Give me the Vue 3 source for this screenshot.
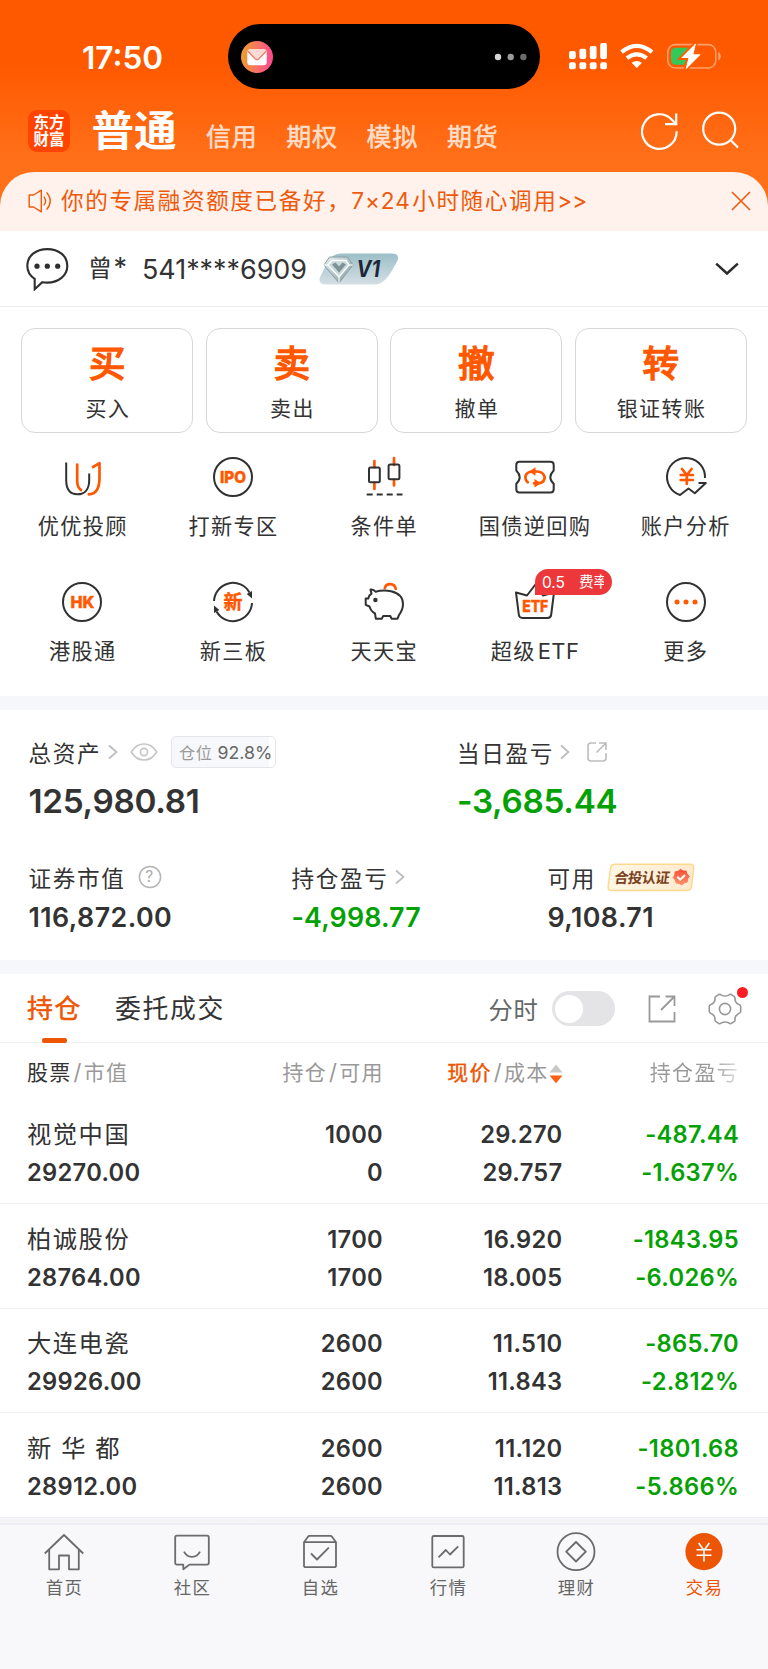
<script setup>
const accountTabs = ['信用', '期权', '模拟', '期货']
const actions = [
  { mark: '买', label: '买入' },
  { mark: '卖', label: '卖出' },
  { mark: '撤', label: '撤单' },
  { mark: '转', label: '银证转账' },
]
const tools = [
  { icon: 'uu', label: '优优投顾' },
  { icon: 'ipo', label: '打新专区' },
  { icon: 'cond', label: '条件单' },
  { icon: 'repo', label: '国债逆回购' },
  { icon: 'analysis', label: '账户分析' },
  { icon: 'hk', label: '港股通' },
  { icon: 'neeq', label: '新三板' },
  { icon: 'pig', label: '天天宝' },
  { icon: 'etf', label: '超级', latin: 'ETF', badge: true },
  { icon: 'more', label: '更多' },
]
const holdings = [
  { name: '视觉中国', value: '29270.00', qty: '1000', avail: '0', price: '29.270', cost: '29.757', pnl: '-487.44', pct: '-1.637%' },
  { name: '柏诚股份', value: '28764.00', qty: '1700', avail: '1700', price: '16.920', cost: '18.005', pnl: '-1843.95', pct: '-6.026%' },
  { name: '大连电瓷', value: '29926.00', qty: '2600', avail: '2600', price: '11.510', cost: '11.843', pnl: '-865.70', pct: '-2.812%' },
  { name: '新 华 都', value: '28912.00', qty: '2600', avail: '2600', price: '11.120', cost: '11.813', pnl: '-1801.68', pct: '-5.866%' },
]
const nav = [
  { icon: 'home', label: '首页' },
  { icon: 'chat', label: '社区' },
  { icon: 'pick', label: '自选' },
  { icon: 'market', label: '行情' },
  { icon: 'wealth', label: '理财' },
  { icon: 'trade', label: '交易', active: true },
]
</script>

<template>
  <div class="page">
    <header class="top">
      <div class="status">
        <span class="time">17:50</span>
        <div class="island">
          <svg class="mail" width="32" height="32" viewBox="0 0 32 32">
            <defs>
              <linearGradient id="mailBg" x1="0" x2="1" y1="0" y2="0.1">
                <stop offset="0" stop-color="#e9a526" /><stop offset="0.55" stop-color="#fb7363" /><stop offset="1" stop-color="#fa4c8c" />
              </linearGradient>
            </defs>
            <circle cx="16" cy="16" r="16" fill="url(#mailBg)" />
            <rect x="6.3" y="8.3" width="19.4" height="16" rx="3" fill="#fff" />
            <path d="M7.3 9.3Q8 8.3 9.5 8.3H22.5Q24 8.3 24.7 9.3L17.7 17Q16 18.6 14.3 17Z" fill="#ffd9d3" />
            <path d="M6.8 10L14 17.8Q16 19.6 18 17.8L25.2 10" fill="none" stroke="#f57a62" stroke-width="1.3" />
          </svg>
          <svg width="34" height="8" viewBox="0 0 34 8">
            <circle cx="4" cy="4" r="3.2" fill="#d6d6d6" /><circle cx="16.7" cy="4" r="3.2" fill="#9c9c9c" /><circle cx="29.4" cy="4" r="3.2" fill="#6b6b6b" />
          </svg>
        </div>
        <svg class="signals" width="154" height="28" viewBox="0 0 154 28">
          <g fill="#fff">
            <rect x="0" y="9" width="6.8" height="8" rx="2" /><rect x="10.4" y="6.8" width="6.8" height="10.2" rx="2" />
            <rect x="20.8" y="4" width="6.8" height="13" rx="2" /><rect x="31.2" y="1" width="6.8" height="16" rx="2" />
            <rect x="0" y="20.3" width="6.8" height="7" rx="2" /><rect x="10.4" y="20.3" width="6.8" height="7" rx="2" />
            <rect x="20.8" y="20.3" width="6.8" height="7" rx="2" /><rect x="31.2" y="20.3" width="6.8" height="7" rx="2" />
            <path d="M67.8 26L62.6 20.8Q67.8 17 73 20.8Z" />
          </g>
          <g fill="none" stroke="#fff" stroke-width="4.2">
            <path d="M52.6 10.2Q67.8 -2.4 83 10.2" /><path d="M58 16.2Q67.8 8.6 77.6 16.2" />
          </g>
          <rect x="98.8" y="2.6" width="48" height="23.4" rx="7.5" fill="none" stroke="#fff" stroke-opacity=".42" stroke-width="1.6" />
          <path d="M149.3 9.8Q151.8 11.4 151.8 14.2Q151.8 17 149.3 18.6Z" fill="#fff" fill-opacity=".45" />
          <path d="M107 5.8H119L113 15L114 17.5H118L115 22.8H107Q102 22.8 102 17.8V10.8Q102 5.8 107 5.8Z" fill="#34c759" />
          <path d="M126.8 1.5L112.4 16H119.6L116.8 27.2L131.4 12.6H124.2Z" fill="#fff" stroke="#ff5c04" stroke-width="4" paint-order="stroke" />
          <path d="M126.8 1.5L112.4 16H119.6L116.8 27.2L131.4 12.6H124.2Z" fill="#fff" />
        </svg>
      </div>
      <div class="titlebar">
        <div class="logo"><span>东方</span><span>财富</span></div>
        <h1>普通</h1>
        <nav class="acct-tabs"><span v-for="t in accountTabs" :key="t">{{ t }}</span></nav>
        <svg class="tools-svg" width="100" height="40" viewBox="0 0 100 40" fill="none" stroke="#fff" stroke-width="2.2">
          <path d="M35.6 20.3A17.3 17.3 0 1 1 30.6 8.4L35 13" /><path d="M35.2 2.5V13.2H24" />
          <circle cx="78.2" cy="17.7" r="16" /><path d="M89.5 29L97 36.5" />
        </svg>
      </div>
    </header>

    <div class="notice">
      <svg width="24" height="24" viewBox="0 0 24 24" fill="none" stroke="#ee5a0c" stroke-width="1.4" stroke-linejoin="round">
        <path d="M1.2 6H5.6L13.3 1.2V22.8L5.6 18H1.2Z" /><path d="M15.8 7.6Q19.4 12 15.8 16.4M18.6 3.4Q25.8 12 18.6 20.6" />
      </svg>
      <p>你的专属融资额度已备好，<span class="lat">7×24</span>小时随心调用<span class="arr">&gt;&gt;</span></p>
      <svg class="close" width="20" height="20" viewBox="0 0 20 20" stroke="#ee5a0c" stroke-width="1.6"><path d="M1 1L19 19M19 1L1 19" /></svg>
    </div>

    <div class="account">
      <svg width="44" height="44" viewBox="0 0 44 44">
        <path d="M9.7 42.2V31.8Q2.3 27 2.3 18.7C2.3 8.8 11 2.1 22.3 2.1S42.3 8.8 42.3 18.7S33.5 35.6 22.3 35.6Q19.5 35.6 17.3 35.2Z" fill="none" stroke="#2f2f2f" stroke-width="2.1" />
        <g fill="#2f2f2f"><circle cx="12" cy="19.2" r="2.6" /><circle cx="22.3" cy="19.2" r="2.6" /><circle cx="32.7" cy="19.2" r="2.6" /></g>
      </svg>
      <span class="who">曾<i>*</i></span><span class="no">541****6909</span>
      <svg class="vip" width="80" height="32" viewBox="0 0 80 32">
        <defs>
          <linearGradient id="vbg" x1="0" x2="0" y1="0" y2="1"><stop offset="0" stop-color="#9cbfc7" /><stop offset="1" stop-color="#d3dfe4" /></linearGradient>
          <linearGradient id="dia" x1="0" x2="1" y1="0" y2="1"><stop offset="0" stop-color="#e9f2f3" /><stop offset="1" stop-color="#82979b" /></linearGradient>
        </defs>
        <path d="M22 .5H73Q81 .5 78.6 7.5L75 14Q66 31 57 31.5H7Q-1 31.5 .8 24.5L7 12Q12 .5 22 .5Z" fill="url(#vbg)" />
        <path d="M10.5 4H28.5L34 12L20 30L5 12Z" fill="url(#dia)" stroke="#879da3" />
        <path d="M13 7.5H27L30 12L20 24L9 12Z" fill="#c9d8da" stroke="#f8ffff" stroke-width="1.3" />
        <path d="M13 11.5L20 19.5L27 11.5L23.5 9.5L20 13.5L16.5 9.5Z" fill="#7d9296" /><path d="M5 12H10M30 12H34M20 24V30" stroke="#fff" />
        <text x="37.5" y="24" class="viptext" textLength="23.5" lengthAdjust="spacingAndGlyphs">V1</text>
      </svg>
      <svg class="down" width="24" height="14" viewBox="0 0 24 14" fill="none" stroke="#2b2b2b" stroke-width="2.5"><path d="M1.2 1.6L12 11.5L22.8 1.6" /></svg>
    </div>

    <section class="actions">
      <div v-for="a in actions" :key="a.mark" class="card"><b>{{ a.mark }}</b><span>{{ a.label }}</span></div>
    </section>

    <section class="tools">
      <div v-for="t in tools" :key="t.icon" class="tool">
        <svg width="44" height="44" viewBox="-22 -22 44 44" class="ticon">
          <template v-if="t.icon === 'uu'">
            <path d="M-15.8 -14.5V3C-15.8 12 -12 17.3 -4.5 17.3S7.2 12 7.2 3V-3.5" />
            <path class="o" d="M-4.8 -12.5V4Q-4.8 10.5 -1 13M11 -10L17.5 -13.8V1Q17.5 17 6.8 17.3" />
          </template>
          <template v-else-if="t.icon === 'ipo'"><circle r="19" /><text class="ot" x="0" y="5.9" text-anchor="middle" font-size="16" textLength="26" lengthAdjust="spacingAndGlyphs">IPO</text></template>
          <template v-else-if="t.icon === 'cond'">
            <path class="o" d="M-9.6 -16V-9.5M-9.6 6V12M10 -19V-12M10 2.5V8.5" />
            <rect x="-15" y="-9.5" width="10.8" height="14.7" rx="1.5" /><rect x="4.6" y="-12.5" width="10.8" height="14.7" rx="1.5" />
            <path d="M-17.3 17.4H18.5" stroke-dasharray="6 4" />
          </template>
          <template v-else-if="t.icon === 'repo'">
            <path d="M-15.5 -15.2H15.5Q18.7 -15.2 18.7 -12V-6.5Q15.3 -3 15.3 .3Q15.3 3.6 18.7 6.8V12.2Q18.7 15.4 15.5 15.4H-15.5Q-18.7 15.4 -18.7 12.2V6.8Q-15.3 3.6 -15.3 .3Q-15.3 -3 -18.7 -6.5V-12Q-18.7 -15.2 -15.5 -15.2Z" />
            <path class="o" d="M-7.3 5.3Q-11.3 1.5 -8.5 -3Q-6.5 -5.5 -2 -5.5H1.5Q4.5 -5.5 6.5 -4.3M7.3 -3.8Q11.3 -.5 8.5 4Q6.5 6.3 2 6.3H-1" />
            <path class="of" d="M-6 -5.5L.5 -9.7V-1.3ZM6 6.3L-.5 2.1V10.5Z" />
          </template>
          <template v-else-if="t.icon === 'analysis'">
            <path d="M19 1A19 19 0 1 0 -6 18L2.5 11.5L8.8 16.2L19.8 6H12.5" />
            <path class="o" d="M-4 -8L.8 -2L5.6 -8M.8 -2V7M-5.3 -2H6.9M-5.3 3H6.9" stroke-width="2.8" />
          </template>
          <template v-else-if="t.icon === 'hk'"><circle r="19" /><text class="ot" x=".5" y="6.1" text-anchor="middle" font-size="16.5" textLength="24" lengthAdjust="spacingAndGlyphs">HK</text></template>
          <template v-else-if="t.icon === 'neeq'">
            <path d="M-19 -1A19 19 0 0 1 16.5 -9.5M19 1A19 19 0 0 1 -16.5 9.5" />
            <path class="df" d="M13.7 -8L19 -11V-3.5ZM-13.7 8L-19 11V3.5Z" />
            <text class="ot cjk" x="0" y="6.6" text-anchor="middle" font-size="19">新</text>
          </template>
          <template v-else-if="t.icon === 'pig'">
            <path d="M-8.5 -10.3Q-1 -12.2 7 -10.8Q19 -8 19 2Q19 7.5 15 13L13.5 16.7H7.5L6.3 14H-.8L-2.3 16.7H-8.2L-9 11.5Q-13 9.5 -14.5 4.5L-18.3 2.8V-3.5H-15.8L-14.5 -6.6L-12.5 -8.2L-13.5 -12.5Q-10.5 -13 -8.5 -10.3Z" />
            <circle class="df" cx="-8.6" cy="-2" r="2.2" /><path class="o" d="M.8 -13.8C2 -19.3 10.5 -19.5 11.8 -13" />
          </template>
          <template v-else-if="t.icon === 'etf'">
            <path d="M-19 -9.5L-8 -6.5L0 -17L8 -6.5L19 -9.5L16.2 12.5Q15.8 16 12.5 16H-12.5Q-15.8 16 -16.2 12.5Z" />
            <text class="ot" x=".2" y="9.6" text-anchor="middle" font-size="16.5" textLength="26" lengthAdjust="spacingAndGlyphs">ETF</text>
          </template>
          <template v-else><circle r="19" /><circle class="of" cx="-9" r="2.5" /><circle class="of" r="2.5" /><circle class="of" cx="9" r="2.5" /></template>
        </svg>
        <span>{{ t.label }}<i v-if="t.latin">{{ t.latin }}</i></span>
        <div v-if="t.badge" class="rate"><em>0.5</em><em class="cut">费率</em></div>
      </div>
    </section>

    <div class="band"></div>

    <section class="assets">
      <div class="row two">
        <div>
          <div class="lbl">总资产
            <svg class="gt" width="10" height="16" viewBox="0 0 10 16"><path d="M1 1.5L8.5 8L1 14.5" /></svg>
            <svg class="eye" width="28" height="20" viewBox="0 0 28 20" fill="none" stroke="#c6c6c6" stroke-width="1.7"><path d="M1.3 10Q6 2 14 2T26.7 10Q22 18 14 18T1.3 10Z" /><circle cx="14" cy="10" r="3.6" /></svg>
            <span class="pos">仓位<b>92.8%</b></span>
          </div>
          <div class="big">125,980.81</div>
        </div>
        <div>
          <div class="lbl">当日盈亏
            <svg class="gt" width="10" height="16" viewBox="0 0 10 16"><path d="M1 1.5L8.5 8L1 14.5" /></svg>
            <svg class="ext" width="20" height="20" viewBox="0 0 20 20" fill="none" stroke="#bdbdbd" stroke-width="1.6"><path d="M9 1H4Q1 1 1 4V16Q1 19 4 19H16Q19 19 19 16V11M12 1H19V8M18.5 1.5L9.5 10.5" /></svg>
          </div>
          <div class="big g">-3,685.44</div>
        </div>
      </div>
      <div class="row three">
        <div>
          <div class="lbl">证券市值
            <svg class="q" width="24" height="24" viewBox="0 0 24 24"><circle cx="12" cy="12" r="10.6" fill="none" stroke="#b4b4b4" stroke-width="1.5" /><text x="12" y="17.2" text-anchor="middle" font-size="15.5" fill="#aaa">?</text></svg>
          </div>
          <div class="mid">116,872.00</div>
        </div>
        <div>
          <div class="lbl">持仓盈亏
            <svg class="gt" width="10" height="16" viewBox="0 0 10 16"><path d="M1 1.5L8.5 8L1 14.5" /></svg>
          </div>
          <div class="mid g tight">-4,998.77</div>
        </div>
        <div>
          <div class="lbl">可用
            <svg class="cert" width="88" height="29" viewBox="0 0 88 29">
              <defs>
                <linearGradient id="cbg" x1="0" x2="1"><stop offset="0" stop-color="#fff7e4" /><stop offset="1" stop-color="#ffe9ce" /></linearGradient>
                <linearGradient id="seal" x1="0" x2="0" y1="0" y2="1"><stop offset="0" stop-color="#f44d38" /><stop offset="1" stop-color="#ff9468" /></linearGradient>
              </defs>
              <path d="M8 1.2H83Q87.3 1.2 86.7 5L84.6 23.5Q84 27.4 80.2 27.4H4.7Q.7 27.4 1.2 23.5L3.6 5Q4.2 1.2 8 1.2Z" fill="url(#cbg)" stroke="#fbd98d" stroke-width="1.5" />
              <text x="0" y="0" transform="translate(6.5 19.6) skewX(-8)" class="certtext" textLength="57.5">合投认证</text>
              <path d="M73.5 6.3L76.1 8L79.2 8L80 11L82.3 13.3L80.6 16L80.2 19.1L77.2 19.8L74.9 22L72.2 20.4L69.1 20L68.4 17L66.2 14.7L67.8 12L68.2 8.9L71.2 8.2Z" fill="url(#seal)" stroke="url(#seal)" stroke-width="1" stroke-linejoin="round" />
              <path d="M70.3 13.8L73.2 16.7L78 12" fill="none" stroke="#fff" stroke-width="2" />
            </svg>
          </div>
          <div class="mid">9,108.71</div>
        </div>
      </div>
    </section>

    <div class="band"></div>

    <section class="tabs">
      <span class="tab on">持仓</span>
      <span class="tab">委托成交</span>
      <span class="fs">分时</span>
      <span class="switch"></span>
      <svg class="share" width="28" height="28" viewBox="0 0 28 28" fill="none" stroke="#9a9a9a" stroke-width="1.8"><path d="M12 1.5H1.5V26.5H26.5V17M17.5 1.5H26.5V11M26 2L13 15" /></svg>
      <div class="gear">
        <svg width="34" height="32" viewBox="-17 -16 34 32" fill="none" stroke="#979797" stroke-width="1.6" stroke-linejoin="round">
          <path d="M-6 -14.7Q-4.8 -14.9 -3.6 -13.9Q0 -12 3.6 -13.9Q4.8 -14.9 6 -14.7L9.4 -12.4Q10.2 -11.8 10 -10Q10 -6.6 13 -5Q15.6 -4 15.7 -2.8V2.8Q15.6 4 13 5Q10 6.6 10 10Q10.2 11.8 9.4 12.4L6 14.7Q4.8 14.9 3.6 13.9Q0 12 -3.6 13.9Q-4.8 14.9 -6 14.7L-9.4 12.4Q-10.2 11.8 -10 10Q-10 6.6 -13 5Q-15.6 4 -15.7 2.8V-2.8Q-15.6 -4 -13 -5Q-10 -6.6 -10 -10Q-10.2 -11.8 -9.4 -12.4Z" /><circle r="5.6" />
        </svg>
        <i></i>
      </div>
    </section>

    <section class="table">
      <div class="tr th">
        <div><b>股票</b><s>/</s>市值</div>
        <div>持仓<s>/</s>可用</div>
        <div class="price"><b>现价</b><s>/</s>成本<svg width="14" height="20" viewBox="0 0 14 20"><path d="M7 .5L13.5 8.5H.5Z" fill="#c8c8c8" /><path d="M7 19.3L13.5 11.5H.5Z" fill="#fb5f13" /></svg></div>
        <div class="fade">持仓盈亏</div>
      </div>
      <div v-for="h in holdings" :key="h.name" class="tr stock">
        <div><span class="name">{{ h.name }}</span><span>{{ h.value }}</span></div>
        <div><span>{{ h.qty }}</span><span>{{ h.avail }}</span></div>
        <div><span>{{ h.price }}</span><span>{{ h.cost }}</span></div>
        <div class="g"><span>{{ h.pnl }}</span><span>{{ h.pct }}</span></div>
      </div>
    </section>

    <footer class="nav">
      <div v-for="n in nav" :key="n.icon" :class="['item', { active: n.active }]">
        <svg width="40" height="40" viewBox="-20 -20 40 40" fill="none" stroke="#6b6b6b" stroke-width="1.8" stroke-linejoin="round">
          <path v-if="n.icon === 'home'" d="M-19.2 1.5L0 -17L19.2 1.5M-14.8 -2.2V17.3H-5V3.5H5V17.3H14.8V-2.2" />
          <template v-else-if="n.icon === 'chat'"><path d="M-15 -16.3H15Q16.8 -16.3 16.8 -14.5V10.8Q16.8 12.6 15 12.6H-2.5L-8.7 17.2V12.6H-15Q-16.8 12.6 -16.8 10.8V-14.5Q-16.8 -16.3 -15 -16.3Z" /><path d="M-8 -.3Q-5.5 4.9 0 4.9T8 -.3" /></template>
          <template v-else-if="n.icon === 'pick'"><path d="M-16 -9.8L-12 -15.2Q-11.5 -16.2 -10.5 -16.2H10.5Q11.5 -16.2 12 -15.2L16 -9.8V13.4Q16 15.2 14.2 15.2H-14.2Q-16 15.2 -16 13.4ZM-16 -9.8H16" /><path d="M-9 1.5L-3 7.5L8.8 -4.3" /></template>
          <template v-else-if="n.icon === 'market'"><rect x="-15.7" y="-16" width="31.4" height="31.4" rx="1.5" /><path d="M-9.5 5.3L-2.2 -2L2 2.5L10.2 -5.7" /></template>
          <template v-else-if="n.icon === 'wealth'"><circle r="18.5" cy="-.3" /><path d="M0 -10L9.8 -.3L0 9.5L-9.8 -.3Z" /></template>
          <template v-else><circle r="18.6" cy="-.4" fill="#ec5504" stroke="none" /><path d="M-5.3 -9L0 -1.5L5.3 -9M0 -1.5V9.5M-7.5 -2.3H7.5M-7.5 3.3H7.5" stroke="#fff" stroke-width="1.6" /></template>
        </svg>
        <span>{{ n.label }}</span>
      </div>
    </footer>
  </div>
</template>

<style>
body { margin: 0; background: #fff; }
</style>

<style scoped>
.page { width: 768px; height: 1669px; overflow: hidden; box-sizing: border-box; display: flex; flex-direction: column; color: #333; font-family: Inter, "Noto Sans CJK SC", sans-serif; background: linear-gradient(#ff5900 0, #ff5900 64px, #ff7019 160px, #ff7019 231px, #fff 231px); }
.page > * { flex: none; }
svg { display: block; flex: none; }
svg text { stroke: none; font-family: Inter, "Noto Sans CJK SC", sans-serif; }
.top { height: 171.5px; }
.status { display: flex; height: 108px; }
.time { width: 228px; box-sizing: border-box; padding-left: 82px; font-size: 31.5px; font-weight: 600; line-height: 115px; color: #fff; }
.island { width: 312px; height: 65px; margin-top: 24px; border-radius: 33px; background: #000; display: flex; align-items: center; justify-content: space-between; padding: 0 12px 0 13px; box-sizing: border-box; }
.signals { margin: 42px 0 0 29px; }
.titlebar { display: flex; height: 46px; align-items: center; }
.logo { width: 42px; height: 42px; margin-left: 28px; border-radius: 9px; background: #ff4300; color: #fff; font-size: 15.5px; font-weight: 700; line-height: 17px; display: flex; flex-direction: column; align-items: center; justify-content: center; }
h1 { margin: 0 0 0 21.5px; font-size: 42.6px; line-height: 46px; font-weight: 700; color: #fff; }
.acct-tabs { display: flex; gap: 28.3px; margin: 12px 0 0 29.3px; }
.acct-tabs span { width: 52px; font-size: 25px; letter-spacing: .8px; line-height: 35px; font-weight: 400; -webkit-text-stroke: .5px #ffdfcb; color: #ffdfcb; white-space: nowrap; }
.tools-svg { margin: 0 27.5px 0 auto; }
.notice { height: 59.5px; background: #fff1eb; border-radius: 34px 34px 0 0; display: flex; align-items: center; padding: 0 17px 0 28px; color: #ee5a0c; }
.notice p { margin: 0 0 0 9px; font-size: 22.6px; letter-spacing: 1.6px; white-space: nowrap; line-height: 60px; }
.lat { letter-spacing: .9px; margin-right: 1.5px; }
.arr { letter-spacing: 0; }
.close { margin-left: auto; }
.account { height: 75px; border-bottom: 1.5px solid #ededee; background: #fff; display: flex; align-items: center; padding: 0 29px 0 25px; }
.account > svg:first-child { margin-top: 1px; }
.who { margin-left: 19px; font-size: 24px; width: 54px; white-space: nowrap; letter-spacing: 1.5px; line-height: 76px; }
.who i { font-style: normal; font-size: 27px; }
.no { font-size: 26.9px; width: 177px; line-height: 76px; }
.viptext { font: italic 700 23.5px Inter, sans-serif; fill: #1b2739; }
.down { margin: 1px 0 0 auto; }
.actions { background: #fff; padding: 20.5px 21px 0; display: grid; grid-template-columns: repeat(4, 1fr); gap: 12.2px; }
.card { height: 105px; box-sizing: border-box; border: 1.2px solid #d7d7d9; border-radius: 14px; display: flex; flex-direction: column; align-items: center; }
.card b { font-size: 36.5px; line-height: 40px; font-weight: 400; -webkit-text-stroke: 1.6px #ff5800; color: #ff5800; margin-top: 15.5px; }
.card span { font-size: 21px; line-height: 30px; letter-spacing: 1.4px; text-indent: 1.4px; margin-top: 10px; }
.tools { background: #fff; padding: 22px 7px 0; height: 263.5px; box-sizing: border-box; display: grid; grid-template-columns: repeat(5, 1fr); grid-auto-rows: 125.6px; }
.tool { position: relative; display: flex; flex-direction: column; align-items: center; }
.tool > span { font-size: 21.2px; line-height: 30px; letter-spacing: 1.3px; text-indent: .5px; white-space: nowrap; margin-top: 12px; }
.tool i { font-style: normal; font-size: 22px; margin-left: 2px; letter-spacing: .4px; }
.ticon { fill: none; stroke: #303133; stroke-width: 2; stroke-linejoin: round; overflow: visible; }
.ticon .o { stroke: #ff5800; stroke-width: 2.7; stroke-linecap: round; }
.ticon .of { fill: #ff5800; stroke: none; }
.ticon .df { fill: #303133; stroke: none; }
.ticon .ot { fill: #ff5800; font-weight: 800; stroke: #ff5800; stroke-width: .4; }
.ticon .cjk { font-weight: 700; }
.rate { position: absolute; left: 75.5px; top: -11px; width: 77px; height: 26px; box-sizing: border-box; border-radius: 13px 13px 13px 0; background: #ec383b; color: #fff; display: flex; padding-left: 7px; line-height: 27px; font-size: 14.6px; }
.rate em { font-style: normal; font-size: 15.5px; }
.rate .cut { margin-left: 14px; width: 25.5px; overflow: hidden; white-space: nowrap; font-size: 14.6px; }
.band { height: 14px; background: #f6f7fa; }
.assets { background: #fff; height: 249.5px; padding: 25px 0 0 28.5px; box-sizing: border-box; }
.row { display: grid; }
.two { grid-template-columns: 428.5px 1fr; height: 125px; }
.three { grid-template-columns: 263px 256px 1fr; }
.lbl { display: flex; align-items: center; height: 34px; font-size: 22.6px; letter-spacing: 1.65px; white-space: nowrap; }
.gt { margin-left: 6.3px; fill: none; stroke: #bdbdbd; stroke-width: 1.7; }
.eye { margin-left: 12px; }
.ext { margin-left: 16.5px; }
.q { margin-left: 13px; }
.cert { margin-left: 10.5px; }
.certtext { font: 700 14.5px "Noto Sans CJK SC", sans-serif; fill: #7a421e; }
.pos { margin-left: 13.5px; height: 31.5px; width: 105px; box-sizing: border-box; border: 1.2px solid #e4e5e8; border-radius: 5px; background: linear-gradient(90deg, #f7f8fb 97px, #fff 97px); font-size: 16.2px; letter-spacing: .6px; color: #999; line-height: 31px; padding-left: 7px; }
.pos b { font-weight: 400; font-size: 17.7px; color: #666; margin-left: 5px; letter-spacing: 0; }
.big { font-size: 33.3px; font-weight: 600; line-height: 40px; margin-top: 11.5px; letter-spacing: -.3px; }
.mid { font-size: 26.8px; font-weight: 600; line-height: 36px; margin-top: 5px; letter-spacing: .45px; }
.mid.tight { letter-spacing: .15px; }
.g { color: #04a104; }
.tabs { background: #fff; height: 69.5px; box-sizing: border-box; border-bottom: 1px solid #f0f0f2; display: flex; align-items: center; padding: 2px 0 0 27px; }
.tab { font-size: 25.9px; letter-spacing: 1.65px; line-height: 68px; white-space: nowrap; width: 88px; }
.tab.on { position: relative; color: #ee5504; -webkit-text-stroke: .5px #ee5504; }
.tab.on::after { content: ""; position: absolute; left: 15px; top: 63.5px; width: 25px; height: 5px; border-radius: 2px; background: #ee5504; }
.fs { margin-left: auto; color: #666; font-size: 24.3px; letter-spacing: .8px; width: 63.5px; white-space: nowrap; }
.switch { width: 63px; height: 35px; border-radius: 18px; background: #e4e4e6; display: flex; align-items: center; padding-left: 3px; box-sizing: border-box; }
.switch::before { content: ""; width: 28px; height: 28px; border-radius: 50%; background: #fff; }
.share { margin-left: 33px; }
.gear { position: relative; margin: 0 26.5px 0 31.5px; }
.gear i { position: absolute; left: 29px; top: -6px; width: 11px; height: 11px; border-radius: 50%; background: #fa1e24; }
.table { background: #fff; height: 474.5px; }
.tr { display: grid; grid-template-columns: 176px 180px 179.5px 176.5px; padding: 0 29px 0 27px; text-align: right; }
.tr > :first-child { text-align: left; }
.th { height: 56.5px; line-height: 59px; font-size: 21px; letter-spacing: 1.3px; color: #999; white-space: nowrap; }
.th > :nth-child(2) { margin-right: -.8px; }
.th b { font-weight: 400; color: #333; }
.th s { text-decoration: none; margin: 0 2.2px 0 2px; font-size: 22px; letter-spacing: 0; }
.th .price { display: flex; justify-content: flex-end; align-items: center; }
.th .price b { color: #ee5504; -webkit-text-stroke: .4px #ee5504; }
.th .price svg { margin-top: 2px; }
.th .fade { background: linear-gradient(90deg, #999 150px, #e5e5e5 177px); background-clip: text; color: transparent; }
.stock { height: 104.5px; box-sizing: border-box; border-bottom: 1.2px solid #f0f0f2; padding-top: 16.7px; font-size: 23.7px; font-weight: 600; letter-spacing: .3px; }
.stock span { display: block; line-height: 37.9px; height: 37.9px; white-space: nowrap; }
.stock .name { font-size: 24.3px; font-weight: 400; letter-spacing: 1.5px; }
.nav { height: 151px; box-sizing: border-box; display: grid; grid-template-columns: repeat(6, 1fr); padding-top: 14px; background: linear-gradient(#f6f6f9 0, #f4f4f8 5px, #e7e7ee 6px, #f8f8fb 7.5px); }
.item { display: flex; flex-direction: column; align-items: center; color: #666; }
.item span { font-size: 17.4px; letter-spacing: 1.2px; text-indent: .8px; line-height: 26px; margin-top: 3.7px; }
.item.active span { color: #ee5504; }
</style>
